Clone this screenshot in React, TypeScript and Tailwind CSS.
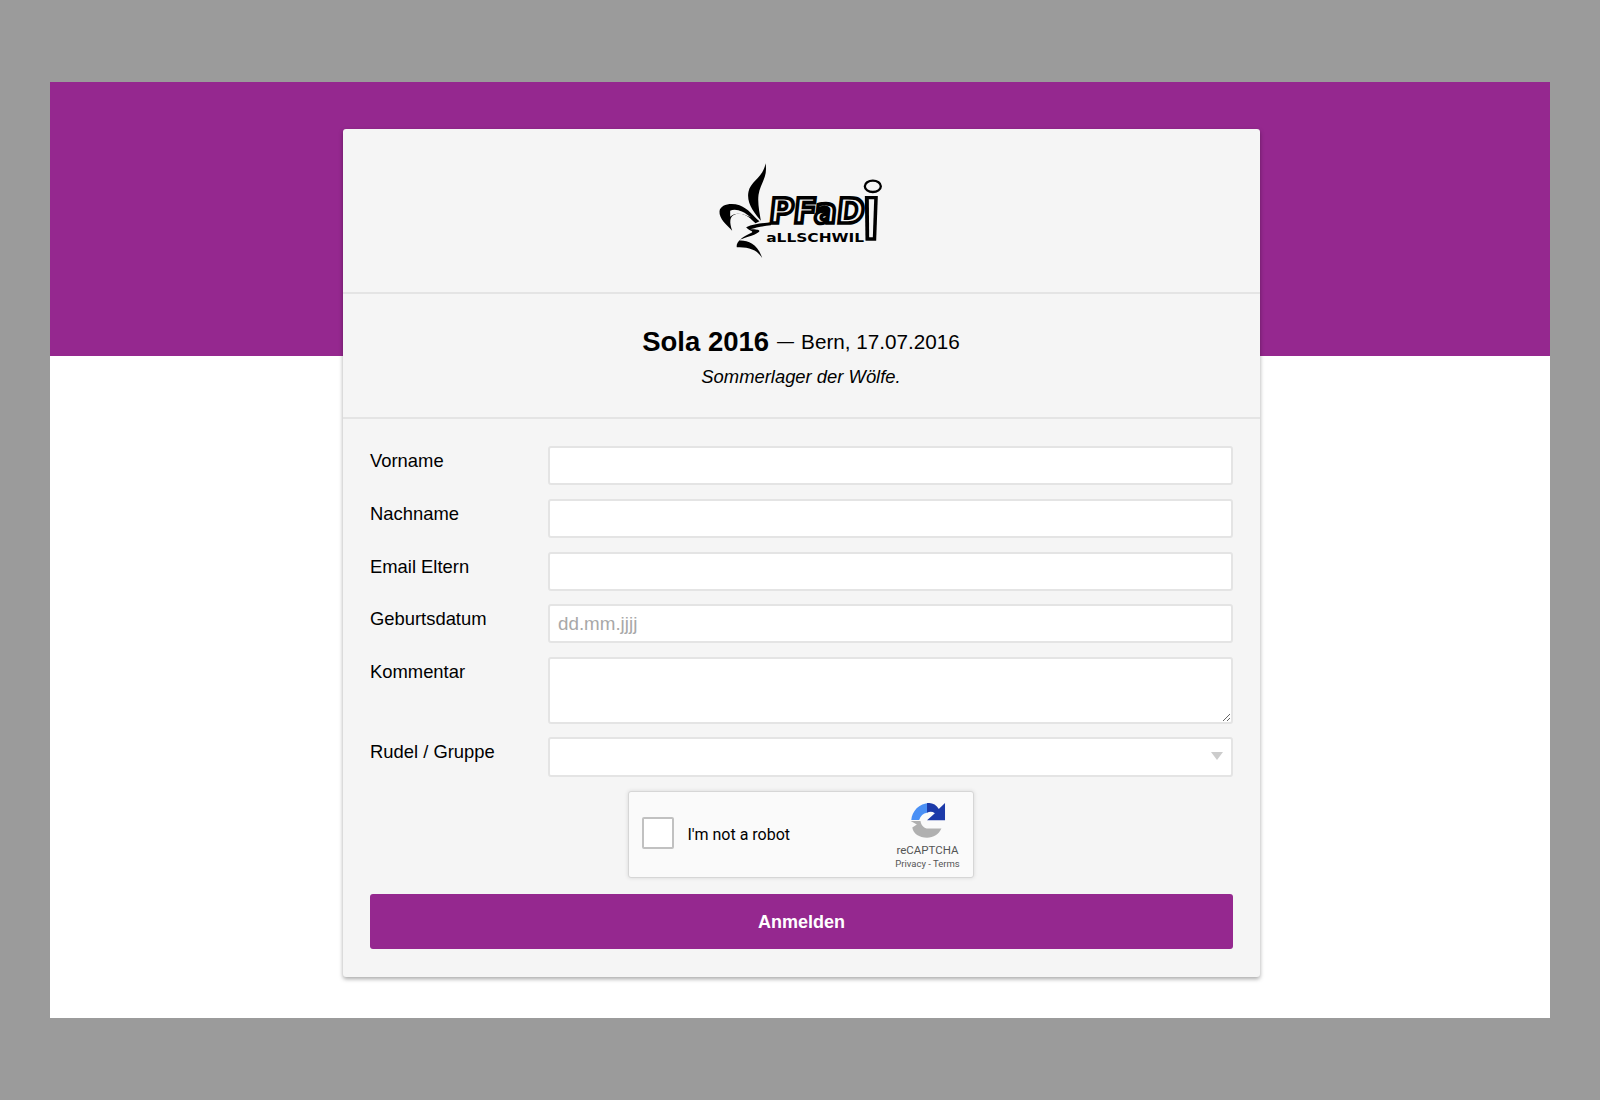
import React from "react";

function Logo() {
  return (
    <svg width="167" height="100" viewBox="114 60 500 300" aria-label="Pfadi Allschwil">
      <path d="M256 70C264 112 240 130 235 165C232 190 238 218 242 242C222 218 198 190 205 155C211 124 250 112 256 70Z" fill="#000" />
      <path d="M238 244C218 228 205 206 178 196C152 187 120 194 118 214C116 236 140 256 156 272C148 248 146 228 168 222C194 216 212 236 226 250Z" fill="#000" />
      <path d="M150 212C165 204 190 212 212 232C190 222 166 214 150 230Z" fill="#f5f5f5" />
      <path d="M198 262C220 250 250 250 275 246L272 256C250 258 228 262 210 268C240 268 248 272 222 284C200 292 182 296 176 302C200 300 232 310 246 354C232 330 205 320 170 322C166 306 186 290 214 278C222 274 206 272 198 262Z" fill="#000" />
      <g transform="skewX(-6)">
        <text x="290" y="248" fontFamily="DejaVu Sans, sans-serif" fontWeight="700" fontSize="104" textLength="286" lengthAdjust="spacingAndGlyphs" fill="#f5f5f5" stroke="#000" strokeWidth="11">PFaD</text>
      </g>
      <path d="M554 168H593L588 302H556Z" fill="#000" />
      <path d="M566 178H582L578 292H567Z" fill="#f5f5f5" />
      <ellipse cx="578" cy="139" rx="24" ry="17" fill="none" stroke="#000" strokeWidth="7" />
      <text x="258" y="307" fontFamily="DejaVu Sans, sans-serif" fontWeight="700" fontSize="36" textLength="294" lengthAdjust="spacingAndGlyphs" fill="#000">aLLSCHWIL</text>
    </svg>
  );
}

function RecaptchaIcon() {
  return (
    <svg width="36" height="38" viewBox="898 70 110 114" aria-hidden="true">
      <path d="M902 124C904 98 925 72 958 72L962 76L950 102C938 104 930 112 926 124Z" fill="#4a90f5" />
      <path d="M950 72C966 70 978 76 986 90L1005 72V125H950L974 103C966 98 958 98 950 102Z" fill="#1c3aa9" />
      <path d="M900 127H930C932 140 940 150 954 150H994C986 168 970 178 950 178C926 178 908 166 905 147L919 138Z" fill="#b0b0b0" />
    </svg>
  );
}

const inputCls =
  "w-full h-[39px] rounded-[3px] border-2 border-[#e4e4e4] bg-white px-[8px] text-[18.8px] text-black outline-none placeholder:text-[#a8a8a8]";

function Row({ label, children }: { label: string; children: React.ReactNode }) {
  return (
    <div className="flex">
      <label className="w-[178px] shrink-0 text-[18.4px] leading-[30px] text-black">{label}</label>
      <div className="relative flex-1">{children}</div>
    </div>
  );
}

export default function App() {
  return (
    <div className="h-[1100px] bg-[#9b9b9b] px-[50px] pt-[82px] font-['Liberation_Sans',Arial,sans-serif] text-black">
      <div className="h-[936px] bg-[linear-gradient(#95288f_274.5px,#ffffff_274.5px)] pt-[47px]">
        <div className="ml-[293px] w-[917px] rounded-[3px] bg-[#f5f5f5] shadow-[0_2px_4px_rgba(0,0,0,0.35)]">
          <div className="flex h-[165px] items-start justify-center border-b-2 border-[#e4e4e4] pt-[31px]">
            <Logo />
          </div>
          <div className="flex h-[125px] flex-col items-center border-b-2 border-[#e4e4e4] pt-[30px] pr-[1px]">
            <div className="flex items-center leading-[36px]">
              <span className="text-[27.5px] font-bold">Sola 2016</span>
              <span className="ml-[8px] text-[17px]">—</span>
              <span className="ml-[7px] text-[20.7px]">Bern, 17.07.2016</span>
            </div>
            <div className="mt-[4px] text-[18.4px] italic leading-[26px]">Sommerlager der Wölfe.</div>
          </div>
          <form className="flex flex-col gap-[13.75px] px-[27px] pb-[28px] pt-[27px]">
            <Row label="Vorname"><input className={inputCls} /></Row>
            <Row label="Nachname"><input className={inputCls} /></Row>
            <Row label="Email Eltern"><input className={inputCls} /></Row>
            <Row label="Geburtsdatum"><input className={inputCls} placeholder="dd.mm.jjjj" /></Row>
            <Row label="Kommentar">
              <textarea className="block h-[66.5px] w-full resize-y rounded-[3px] border-2 border-[#e4e4e4] bg-white px-[8px] text-[18px] outline-none" />
            </Row>
            <Row label="Rudel / Gruppe">
              <select className="block h-[39.5px] w-full appearance-none rounded-[3px] border-2 border-[#e4e4e4] bg-white px-[8px] text-[18px] outline-none" />
              <span className="absolute right-[10px] top-[15px] h-0 w-0 border-x-[6px] border-t-[8px] border-x-transparent border-t-[#cccccc]" />
            </Row>
            <div className="mt-[0.25px] flex justify-center pr-[2px]">
              <div className="flex h-[87px] w-[346px] items-center rounded-[3px] border border-[#d6d6d6] bg-[#fafafa] pl-[13px] pr-[14px] shadow-[0_0_4px_rgba(0,0,0,0.12)] font-['Roboto',sans-serif]">
                <div className="-mt-[2px] h-[32px] w-[32px] rounded-[2px] border-2 border-[#c1c1c1] bg-white" />
                <span className="ml-[14px] mt-[1px] flex-1 text-[16px] text-black">I'm not a robot</span>
                <div className="flex w-[62px] flex-col items-center pt-[4px]">
                  <RecaptchaIcon />
                  <span className="mt-[3px] whitespace-nowrap text-[11.5px] leading-[14px] text-[#555555]">reCAPTCHA</span>
                  <span className="whitespace-nowrap text-[9.5px] leading-[13px] text-[#555555]">Privacy - Terms</span>
                </div>
              </div>
            </div>
            <button type="button" className="mt-[2.5px] h-[55px] w-full rounded-[3px] bg-[#95288f] pt-[1px] text-[18px] font-bold text-white">
              Anmelden
            </button>
          </form>
        </div>
      </div>
    </div>
  );
}
